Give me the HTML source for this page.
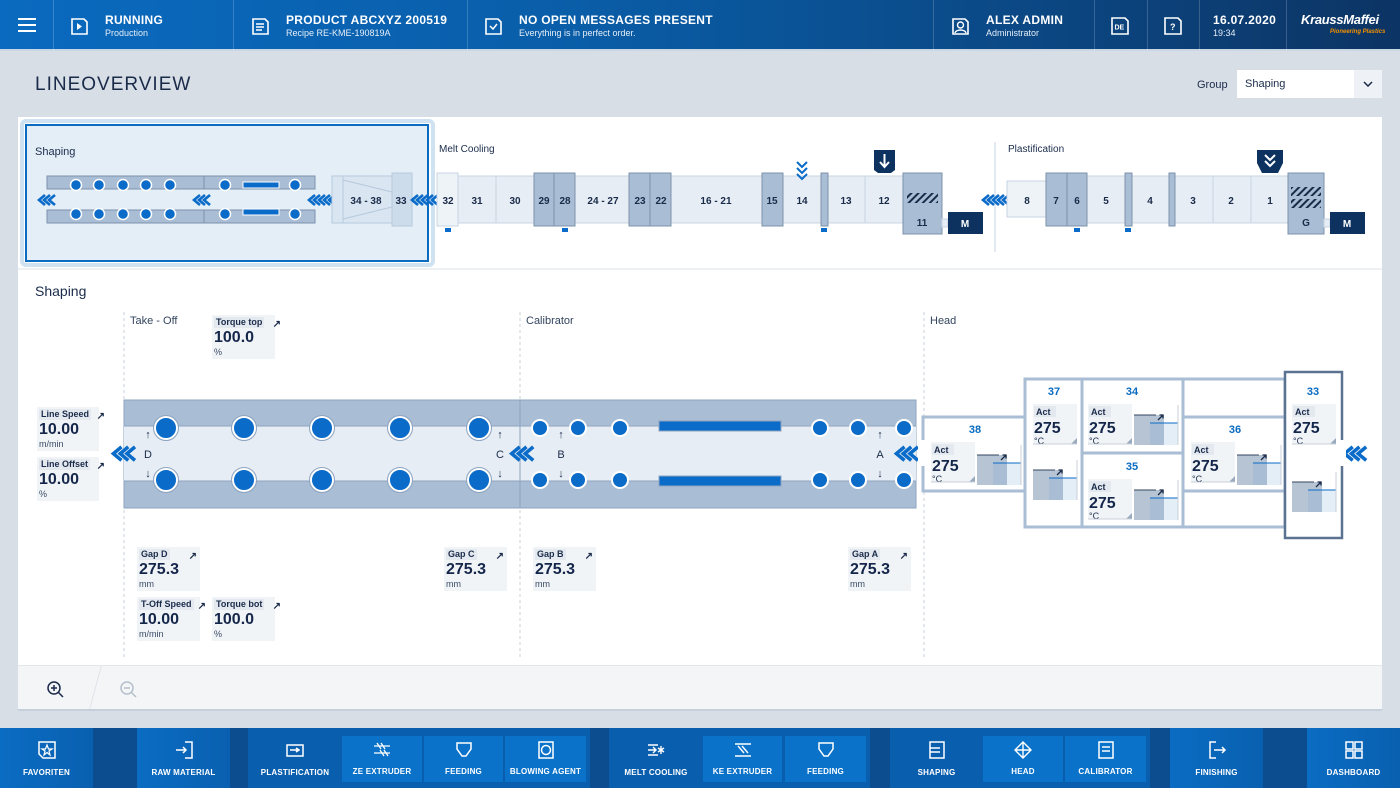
<!DOCTYPE html>
<html><head><meta charset="utf-8"><style>
*{margin:0;padding:0;box-sizing:border-box}
body{width:1400px;height:788px;background:#d8dee5;font-family:"Liberation Sans",sans-serif;position:relative;overflow:hidden;color:#1a2b4a}
.hdr{position:absolute;left:0;top:0;width:1400px;height:51px;background:linear-gradient(90deg,#0a6abf 0%,#0a5ea9 40%,#0b4a88 70%,#0c3464 100%);border-bottom:2px solid #c9d6e4}
.sep{position:absolute;top:0;height:51px;width:1px;background:rgba(255,255,255,.18)}
.ht{position:absolute;color:#fff;font-weight:bold;font-size:12px;letter-spacing:.3px}
.hs{position:absolute;color:#e6eef7;font-size:9px}
.ico{position:absolute}
.panel{position:absolute;left:18px;top:117px;width:1364px;height:594px;background:#fff}
.db{position:absolute;background:#f1f4f7;width:63px;height:44px}
.db .l{position:absolute;left:2px;top:2px;background:#e4e9ef;font-size:9px;font-weight:bold;padding:0 2px;line-height:11px;color:#1a2b4a}
.db .v{position:absolute;left:2px;top:14px;font-size:16px;font-weight:bold;color:#14264a}
.db .u{position:absolute;left:2px;top:32px;font-size:9px;color:#3a4b66}
.db .a{position:absolute;right:-6px;top:4px;font-size:10px;font-weight:bold}
.nav{position:absolute;left:0;top:728px;width:1400px;height:60px;background:#0b4d8e}
.nb{position:absolute;top:0;height:60px;background:linear-gradient(90deg,#0a6cc2,#0a60b0)}
.nb.g{background:#0a5eae}
.sb{position:absolute;top:8px;height:46px;background:#0b72c9}
.nl{position:absolute;bottom:11px;left:0;width:100%;text-align:center;color:#fff;font-size:8px;font-weight:bold;letter-spacing:.2px}
.ni{position:absolute;top:12px;left:50%;margin-left:-10px}
</style></head><body>

<div class="hdr">
<div class="sep" style="left:53px"></div><div class="sep" style="left:233px"></div><div class="sep" style="left:467px"></div><div class="sep" style="left:933px"></div><div class="sep" style="left:1094px"></div><div class="sep" style="left:1147px"></div><div class="sep" style="left:1199px"></div><div class="sep" style="left:1286px"></div>
<svg class="ico" style="left:17px;top:17px" width="20" height="16"><path d="M1 2H19M1 8H19M1 14H19" stroke="#fff" stroke-width="2"/></svg>
<svg class="ico" style="left:69px;top:16px" width="20" height="20"><path d="M3 3H15L18 6V18H3Z" fill="none" stroke="#fff" stroke-width="1.6"/><path d="M8 7L13 10.5L8 14Z" fill="#fff"/></svg>
<div class="ht" style="left:105px;top:13px">RUNNING</div><div class="hs" style="left:105px;top:28px">Production</div>
<svg class="ico" style="left:250px;top:16px" width="20" height="20"><path d="M3 3H15L18 6V18H3Z" fill="none" stroke="#fff" stroke-width="1.6"/><path d="M6 8H14M6 11H14M6 14H12" stroke="#fff" stroke-width="1.4"/></svg>
<div class="ht" style="left:286px;top:13px">PRODUCT ABCXYZ 200519</div><div class="hs" style="left:286px;top:28px">Recipe RE-KME-190819A</div>
<svg class="ico" style="left:483px;top:16px" width="20" height="20"><path d="M3 3H15L18 6V18H3Z" fill="none" stroke="#fff" stroke-width="1.6"/><path d="M7 10L10 13L14 8" fill="none" stroke="#fff" stroke-width="1.5"/></svg>
<div class="ht" style="left:519px;top:13px">NO OPEN MESSAGES PRESENT</div><div class="hs" style="left:519px;top:28px">Everything is in perfect order.</div>
<svg class="ico" style="left:950px;top:16px" width="20" height="20"><path d="M3 3H15L18 6V18H3Z" fill="none" stroke="#fff" stroke-width="1.6"/><circle cx="10.5" cy="9" r="3" fill="none" stroke="#fff" stroke-width="1.4"/><path d="M5 17C6 13 15 13 16 17" fill="none" stroke="#fff" stroke-width="1.4"/></svg>
<div class="ht" style="left:986px;top:13px">ALEX ADMIN</div><div class="hs" style="left:986px;top:28px">Administrator</div>
<svg class="ico" style="left:1110px;top:16px" width="20" height="20"><path d="M2 2H15L18 5V18H2Z" fill="none" stroke="#fff" stroke-width="1.6"/><text x="4.5" y="13.5" font-size="7" font-weight="bold" fill="#fff" font-family="Liberation Sans">DE</text></svg>
<svg class="ico" style="left:1163px;top:16px" width="20" height="20"><path d="M2 2H15L18 5V18H2Z" fill="none" stroke="#fff" stroke-width="1.6"/><text x="7" y="14" font-size="9" font-weight="bold" fill="#fff" font-family="Liberation Sans">?</text></svg>
<div class="ht" style="left:1213px;top:13px">16.07.2020</div><div class="hs" style="left:1213px;top:28px">19:34</div>
<div style="position:absolute;left:1301px;top:12px;color:#fff;font-size:13px;font-weight:bold;font-style:italic;letter-spacing:-.3px">KraussMaffei</div>
<div style="position:absolute;left:1330px;top:29px;color:#f39200;font-size:6px;font-weight:bold;font-style:italic">Pioneering Plastics</div>
</div>

<div style="position:absolute;left:35px;top:74px;font-size:19px;letter-spacing:1px;color:#1a2b4a">LINEOVERVIEW</div>
<div style="position:absolute;left:1197px;top:79px;font-size:11px;color:#1a2b4a">Group</div>
<div style="position:absolute;left:1237px;top:70px;width:145px;height:28px;background:#fff"><div style="position:absolute;left:8px;top:8px;font-size:11px">Shaping</div><div style="position:absolute;right:0;top:0;width:28px;height:28px;background:#eef1f5"></div><svg style="position:absolute;right:9px;top:11px" width="10" height="6"><path d="M1 1L5 5L9 1" fill="none" stroke="#1a2b4a" stroke-width="1.5"/></svg></div>

<div class="panel"></div>
<div style="position:absolute;left:18px;top:268px;width:1364px;height:2px;background:#eef1f4"></div>
<div style="position:absolute;left:18px;top:665px;width:1364px;height:46px;background:#f3f5f7;border-top:1px solid #e2e7ec"></div>
<div style="position:absolute;left:18px;top:709px;width:1364px;height:2px;background:#c5d0dc"></div>
<svg style="position:absolute;left:44px;top:678px" width="22" height="22"><circle cx="10" cy="10" r="6" fill="none" stroke="#1a2b4a" stroke-width="1.5"/><path d="M14.5 14.5L19 19M7 10H13M10 7V13" stroke="#1a2b4a" stroke-width="1.5"/></svg>
<svg style="position:absolute;left:117px;top:678px" width="22" height="22"><circle cx="10" cy="10" r="6" fill="none" stroke="#b5c0cc" stroke-width="1.5"/><path d="M14.5 14.5L19 19M7 10H13" stroke="#b5c0cc" stroke-width="1.5"/></svg>
<div style="position:absolute;left:95px;top:666px;width:1px;height:43px;background:#dfe4ea;transform:skewX(-15deg)"></div>

<svg style="position:absolute;left:0;top:0" width="1400" height="788" font-family="Liberation Sans">
<defs>
<path id="ch" d="M7 0L1 5L7 10" fill="none" stroke="#0a6bc8" stroke-width="2.6"/>
<g id="c3"><use href="#ch"/><use href="#ch" x="5"/><use href="#ch" x="10"/></g>
<g id="c5"><use href="#ch"/><use href="#ch" x="5"/><use href="#ch" x="10"/><use href="#ch" x="15"/><use href="#ch" x="20"/></g>
<pattern id="hat" width="5" height="5" patternUnits="userSpaceOnUse" patternTransform="rotate(45)"><rect width="2" height="5" fill="#1a2b4a"/></pattern>
<g id="bc" fill="#0a6bc8" stroke="#fff" stroke-width="2"><circle cx="166" cy="0" r="11"/><circle cx="244" cy="0" r="11"/><circle cx="322" cy="0" r="11"/><circle cx="400" cy="0" r="11"/><circle cx="479" cy="0" r="11"/><circle cx="540" cy="0" r="8"/><circle cx="578" cy="0" r="8"/><circle cx="620" cy="0" r="8"/><circle cx="820" cy="0" r="8"/><circle cx="858" cy="0" r="8"/><circle cx="904" cy="0" r="8"/></g>
<g id="hb"><rect x="0" y="0" width="44" height="40" fill="#f1f4f7"/><rect x="1" y="2" width="22" height="11" fill="#e4e9ef"/><text x="3" y="11" font-size="9" font-weight="bold" fill="#1a2b4a">Act</text><text x="1" y="29" font-size="16" font-weight="bold" fill="#14264a">275</text><text x="1" y="40" font-size="9" fill="#1a2b4a">°C</text><path d="M44 34V40H38Z" fill="#9aaabe"/><path d="M0 40H44" stroke="#c8d0da"/></g>
<g id="hc"><rect x="0" y="10" width="30" height="30" fill="#b7c4d3"/><rect x="16" y="18" width="14" height="22" fill="#a9bdd4"/><rect x="30" y="18" width="14" height="22" fill="#e4eef7"/><path d="M0 10H22" stroke="#33445f"/><path d="M16 18H44" stroke="#0a6bc8"/><path d="M44 0V40" stroke="#c8d0da"/><path d="M24 15L29 10M25.5 10H29V13.5" stroke="#1a2b4a" stroke-width="1.3" fill="none"/></g>
</defs>
<!-- selected shaping box -->
<rect x="22" y="121" width="411" height="144" rx="4" fill="none" stroke="#cfe2f2" stroke-width="4"/>
<rect x="26" y="125" width="402" height="136" fill="#e3eef7" stroke="#0a6bc0" stroke-width="2"/>
<text x="35" y="155" font-size="11" fill="#1a2b4a">Shaping</text>
<g fill="#a9bdd4" stroke="#7d93ad" stroke-width="1">
<rect x="47" y="176" width="268" height="13"/><rect x="47" y="210" width="268" height="13"/></g>
<path d="M204 176V189M204 210V223" stroke="#7d93ad"/>
<g fill="#0a6bc8" stroke="#fff" stroke-width="1.5">
<circle cx="76" cy="185" r="5.5"/><circle cx="99" cy="185" r="5.5"/><circle cx="123" cy="185" r="5.5"/><circle cx="146" cy="185" r="5.5"/><circle cx="170" cy="185" r="5.5"/><circle cx="225" cy="185" r="5.5"/><circle cx="295" cy="185" r="5.5"/>
<circle cx="76" cy="214" r="5.5"/><circle cx="99" cy="214" r="5.5"/><circle cx="123" cy="214" r="5.5"/><circle cx="146" cy="214" r="5.5"/><circle cx="170" cy="214" r="5.5"/><circle cx="225" cy="214" r="5.5"/><circle cx="295" cy="214" r="5.5"/></g>
<rect x="243" y="182" width="36" height="6" fill="#0a6bc8" stroke="#fff"/><rect x="243" y="209" width="36" height="6" fill="#0a6bc8" stroke="#fff"/>
<use href="#c3" x="38" y="195"/><use href="#c3" x="193" y="195"/><use href="#c5" x="308" y="195"/>
<rect x="332" y="176" width="60" height="47" fill="#d9e6f1" stroke="#b7c9dc"/>
<path d="M343 176L343 223M343 180L392 192M343 219L392 207" fill="none" stroke="#b7c9dc"/>
<rect x="392" y="173" width="20" height="53" fill="#cddcea" stroke="#b7c9dc"/>
<text x="366" y="204" font-size="10" text-anchor="middle" fill="#1a2b4a" font-weight="bold">34 - 38</text>
<text x="401" y="204" font-size="10" text-anchor="middle" fill="#1a2b4a" font-weight="bold">33</text>
<use href="#c5" x="411" y="195"/>
<!-- melt cooling -->
<text x="439" y="152" font-size="10" fill="#1a2b4a">Melt Cooling</text>
<rect x="458" y="176" width="445" height="47" fill="#e6edf4" stroke="#c8d5e3"/>
<rect x="437" y="173" width="21" height="53" fill="#eef3f8" stroke="#c8d5e3"/>
<path d="M496 176V223M865 176V223" stroke="#c8d5e3"/>
<g fill="#a9bdd4" stroke="#7d93ad"><rect x="534" y="173" width="41" height="53"/><rect x="629" y="173" width="42" height="53"/><rect x="762" y="173" width="21" height="53"/><rect x="821" y="173" width="7" height="53"/><rect x="903" y="173" width="39" height="61"/></g>
<path d="M554 173V226M650 173V226" stroke="#7d93ad"/>
<g font-size="10" fill="#1a2b4a" text-anchor="middle" font-weight="bold">
<text x="448" y="204">32</text><text x="477" y="204">31</text><text x="515" y="204">30</text><text x="544" y="204">29</text><text x="565" y="204">28</text><text x="603" y="204">24 - 27</text><text x="640" y="204">23</text><text x="661" y="204">22</text><text x="716" y="204">16 - 21</text><text x="772" y="204">15</text><text x="802" y="204">14</text><text x="846" y="204">13</text><text x="884" y="204">12</text><text x="922" y="226">11</text></g>
<g fill="#0a6bc8"><rect x="445" y="228" width="6" height="4"/><rect x="562" y="228" width="6" height="4"/><rect x="821" y="228" width="6" height="4"/><rect x="1074" y="228" width="6" height="4"/><rect x="1125" y="228" width="6" height="4"/></g>
<path d="M797 162L802 167L807 162M797 168L802 173L807 168M797 174L802 179L807 174" fill="none" stroke="#0a6bc8" stroke-width="2"/>
<path d="M874 150H895V170L891 173H878L874 170Z" fill="#0d3260"/><path d="M884.5 154V167M880 162L884.5 167L889 162" fill="none" stroke="#fff" stroke-width="2"/>
<rect x="907" y="193" width="31" height="10" fill="url(#hat)"/>
<rect x="942" y="219" width="6" height="8" fill="#e6edf4" stroke="#c8d5e3"/>
<rect x="948" y="212" width="35" height="22" fill="#0d3260"/><text x="965" y="227" font-size="10" fill="#fff" text-anchor="middle" font-weight="bold">M</text>
<path d="M995 142V252" stroke="#c8d5e3"/>
<!-- plastification -->
<text x="1008" y="152" font-size="10" fill="#1a2b4a">Plastification</text>
<use href="#c5" x="982" y="195"/>
<rect x="1046" y="176" width="242" height="47" fill="#e6edf4" stroke="#c8d5e3"/>
<rect x="1007" y="181" width="39" height="36" fill="#eef3f8" stroke="#c8d5e3"/>
<path d="M1213 176V223M1251 176V223" stroke="#c8d5e3"/>
<g fill="#a9bdd4" stroke="#7d93ad"><rect x="1046" y="173" width="41" height="53"/><rect x="1125" y="173" width="7" height="53"/><rect x="1169" y="173" width="6" height="53"/><rect x="1288" y="173" width="36" height="61"/></g>
<path d="M1067 173V226" stroke="#7d93ad"/>
<g font-size="10" fill="#1a2b4a" text-anchor="middle" font-weight="bold"><text x="1027" y="204">8</text><text x="1056" y="204">7</text><text x="1077" y="204">6</text><text x="1106" y="204">5</text><text x="1150" y="204">4</text><text x="1193" y="204">3</text><text x="1231" y="204">2</text><text x="1270" y="204">1</text><text x="1306" y="226">G</text></g>
<path d="M1257 150H1283V163L1278 173H1262L1257 163Z" fill="#0d3260"/><path d="M1265 155L1270 160L1275 155M1265 161L1270 166L1275 161" fill="none" stroke="#fff" stroke-width="2"/>
<rect x="1291" y="187" width="30" height="9" fill="url(#hat)"/><rect x="1291" y="199" width="30" height="9" fill="url(#hat)"/>
<rect x="1324" y="219" width="6" height="8" fill="#e6edf4" stroke="#c8d5e3"/>
<rect x="1330" y="212" width="35" height="22" fill="#0d3260"/><text x="1347" y="227" font-size="10" fill="#fff" text-anchor="middle" font-weight="bold">M</text>

<!-- detail -->
<text x="35" y="296" font-size="14" fill="#1a2b4a">Shaping</text>
<g font-size="11" fill="#33445f"><text x="130" y="324">Take - Off</text><text x="526" y="324">Calibrator</text><text x="930" y="324">Head</text></g>
<path d="M124 312V660M520 312V660M924 312V660" stroke="#c8d0da" stroke-dasharray="3 3"/>
<rect x="124" y="400" width="792" height="108" fill="#a9bdd4" stroke="#8ea4bf"/>
<rect x="124" y="426" width="792" height="55" fill="#e6edf4"/>
<path d="M124 426H916M124 481H916" stroke="#8ea4bf"/>
<path d="M520 400V508" stroke="#8ea4bf"/>
<use href="#bc" y="428"/><use href="#bc" y="480"/>
<g fill="none" stroke="#8ea4bf" stroke-width="1"><circle cx="166" cy="428" r="12.5"/><circle cx="244" cy="428" r="12.5"/><circle cx="322" cy="428" r="12.5"/><circle cx="400" cy="428" r="12.5"/><circle cx="479" cy="428" r="12.5"/><circle cx="166" cy="480" r="12.5"/><circle cx="244" cy="480" r="12.5"/><circle cx="322" cy="480" r="12.5"/><circle cx="400" cy="480" r="12.5"/><circle cx="479" cy="480" r="12.5"/></g>
<rect x="659" y="421" width="122" height="10" fill="#0a6bc8" stroke="#8ea4bf"/><rect x="659" y="476" width="122" height="10" fill="#0a6bc8" stroke="#8ea4bf"/>
<g font-size="11" fill="#1a2b4a" text-anchor="middle"><text x="148" y="438">↑</text><text x="148" y="458">D</text><text x="148" y="477">↓</text><text x="500" y="438">↑</text><text x="500" y="458">C</text><text x="500" y="477">↓</text><text x="561" y="438">↑</text><text x="561" y="458">B</text><text x="561" y="477">↓</text><text x="880" y="438">↑</text><text x="880" y="458">A</text><text x="880" y="477">↓</text></g>
<g transform="scale(1.35)"><use href="#c3" x="83" y="331"/><use href="#c3" x="378" y="331"/><use href="#c3" x="663" y="331"/><use href="#c3" x="995" y="331"/></g>
<!-- head -->
<g fill="#fff" stroke="#a9bdd4" stroke-width="3"><rect x="923" y="417" width="102" height="74"/><rect x="1025" y="379" width="260" height="148"/><rect x="1025" y="379" width="57" height="148"/><rect x="1082" y="379" width="101" height="74"/><rect x="1082" y="453" width="101" height="74"/><rect x="1183" y="417" width="102" height="74"/></g>
<rect x="1285" y="372" width="57" height="166" fill="#fff" stroke="#5b7391" stroke-width="2.5"/>
<rect x="1340" y="440" width="6" height="26" fill="#fff"/><rect x="918" y="440" width="8" height="26" fill="#fff"/>
<g font-size="11" font-weight="bold" fill="#0a6bc0" text-anchor="middle"><text x="975" y="433">38</text><text x="1054" y="395">37</text><text x="1132" y="395">34</text><text x="1132" y="470">35</text><text x="1235" y="433">36</text><text x="1313" y="395">33</text></g>
<use href="#hb" x="931" y="442"/><use href="#hc" x="977" y="445"/>
<use href="#hb" x="1033" y="404"/><use href="#hc" x="1033" y="460"/>
<use href="#hb" x="1088" y="404"/><use href="#hc" x="1134" y="405"/>
<use href="#hb" x="1088" y="479"/><use href="#hc" x="1134" y="480"/>
<use href="#hb" x="1191" y="442"/><use href="#hc" x="1237" y="445"/>
<use href="#hb" x="1292" y="404"/><use href="#hc" x="1292" y="472"/>
</svg>

<div class="db" style="left:37px;top:407px;width:62px"><div class="l">Line Speed</div><div class="a">↗</div><div class="v">10.00</div><div class="u">m/min</div></div>
<div class="db" style="left:37px;top:457px;width:62px"><div class="l">Line Offset</div><div class="a">↗</div><div class="v">10.00</div><div class="u">%</div></div>
<div class="db" style="left:212px;top:315px"><div class="l">Torque top</div><div class="a">↗</div><div class="v">100.0</div><div class="u">%</div></div>
<div class="db" style="left:137px;top:547px"><div class="l">Gap D</div><div class="a" style="right:3px">↗</div><div class="v">275.3</div><div class="u">mm</div></div>
<div class="db" style="left:137px;top:597px"><div class="l">T-Off Speed</div><div class="a">↗</div><div class="v">10.00</div><div class="u">m/min</div></div>
<div class="db" style="left:212px;top:597px"><div class="l">Torque bot</div><div class="a">↗</div><div class="v">100.0</div><div class="u">%</div></div>
<div class="db" style="left:444px;top:547px"><div class="l">Gap C</div><div class="a" style="right:3px">↗</div><div class="v">275.3</div><div class="u">mm</div></div>
<div class="db" style="left:533px;top:547px"><div class="l">Gap B</div><div class="a" style="right:3px">↗</div><div class="v">275.3</div><div class="u">mm</div></div>
<div class="db" style="left:848px;top:547px"><div class="l">Gap A</div><div class="a" style="right:3px">↗</div><div class="v">275.3</div><div class="u">mm</div></div>

<div class="nav">
<div class="nb" style="left:0;width:93px"><svg class="ni" width="20" height="20"><path d="M2 2H18V18H6L2 14Z" fill="none" stroke="#fff" stroke-width="1.5"/><path d="M10 5L11.5 9H15L12 11L13 15L10 12.5L7 15L8 11L5 9H8.5Z" fill="none" stroke="#fff" stroke-width="1.2"/></svg><div class="nl">FAVORITEN</div></div>
<div class="nb" style="left:137px;width:93px"><svg class="ni" width="20" height="20"><path d="M11 2H18V18H11M2 10H12M9 7L12 10L9 13" fill="none" stroke="#fff" stroke-width="1.5"/></svg><div class="nl">RAW MATERIAL</div></div>
<div class="nb g" style="left:248px;width:342px"><div style="position:absolute;left:0;width:94px;height:60px"><svg class="ni" width="20" height="20"><path d="M2 5H18V16H2ZM5 10H14M11 8L14 10L11 12" fill="none" stroke="#fff" stroke-width="1.5"/></svg><div class="nl">PLASTIFICATION</div></div>
<div class="sb" style="left:94px;width:80px"><svg class="ni" style="top:4px" width="20" height="20"><path d="M2 6H18M2 13H18M5 3L9 9M9 3L13 9M8 10L12 16M12 10L16 16" stroke="#fff" stroke-width="1.3"/></svg><div class="nl" style="bottom:6px">ZE EXTRUDER</div></div>
<div class="sb" style="left:176px;width:79px"><svg class="ni" style="top:4px" width="20" height="20"><path d="M3 3H17V9L12 16H8L3 9Z" fill="none" stroke="#fff" stroke-width="1.5"/></svg><div class="nl" style="bottom:6px">FEEDING</div></div>
<div class="sb" style="left:257px;width:81px"><svg class="ni" style="top:4px" width="20" height="20"><path d="M3 2H17V18H3Z" fill="none" stroke="#fff" stroke-width="1.5"/><circle cx="10" cy="10" r="4.5" fill="none" stroke="#fff" stroke-width="1.5"/></svg><div class="nl" style="bottom:6px">BLOWING AGENT</div></div></div>
<div class="nb g" style="left:609px;width:261px"><div style="position:absolute;left:0;width:94px;height:60px"><svg class="ni" width="20" height="20"><path d="M2 5H12M2 15H12M2 10H10M7 7L10 10L7 13M15 6V14M12 8L18 12M18 8L12 12" fill="none" stroke="#fff" stroke-width="1.4"/></svg><div class="nl">MELT COOLING</div></div>
<div class="sb" style="left:94px;width:79px"><svg class="ni" style="top:4px" width="20" height="20"><path d="M2 4H18M2 16H18M5 6L11 13M9 6L15 13" stroke="#fff" stroke-width="1.4"/></svg><div class="nl" style="bottom:6px">KE EXTRUDER</div></div>
<div class="sb" style="left:176px;width:81px"><svg class="ni" style="top:4px" width="20" height="20"><path d="M3 3H17V9L12 16H8L3 9Z" fill="none" stroke="#fff" stroke-width="1.5"/></svg><div class="nl" style="bottom:6px">FEEDING</div></div></div>
<div class="nb g" style="left:890px;width:260px"><div style="position:absolute;left:0;width:93px;height:60px"><svg class="ni" width="20" height="20"><path d="M3 2H17V18H3ZM3 8H13M3 12H13" fill="none" stroke="#fff" stroke-width="1.5"/></svg><div class="nl">SHAPING</div></div>
<div class="sb" style="left:93px;width:80px"><svg class="ni" style="top:4px" width="20" height="20"><path d="M2 10L10 2L18 10L10 18ZM2 10H18M10 2V18" fill="none" stroke="#fff" stroke-width="1.4"/></svg><div class="nl" style="bottom:6px">HEAD</div></div>
<div class="sb" style="left:175px;width:81px"><svg class="ni" style="top:4px" width="20" height="20"><path d="M3 2H17V18H3ZM6 7H14M6 11H14" fill="none" stroke="#fff" stroke-width="1.5"/></svg><div class="nl" style="bottom:6px">CALIBRATOR</div></div></div>
<div class="nb" style="left:1170px;width:93px"><svg class="ni" width="20" height="20"><path d="M9 2H3V18H9M7 10H18M15 7L18 10L15 13" fill="none" stroke="#fff" stroke-width="1.5"/></svg><div class="nl">FINISHING</div></div>
<div class="nb" style="left:1307px;width:93px"><svg class="ni" width="20" height="20"><path d="M2 2H9V9H2ZM11 2H18V9H11ZM2 11H9V18H2ZM11 11H18V18H11Z" fill="none" stroke="#fff" stroke-width="1.5"/></svg><div class="nl">DASHBOARD</div></div>
</div>
</body></html>
